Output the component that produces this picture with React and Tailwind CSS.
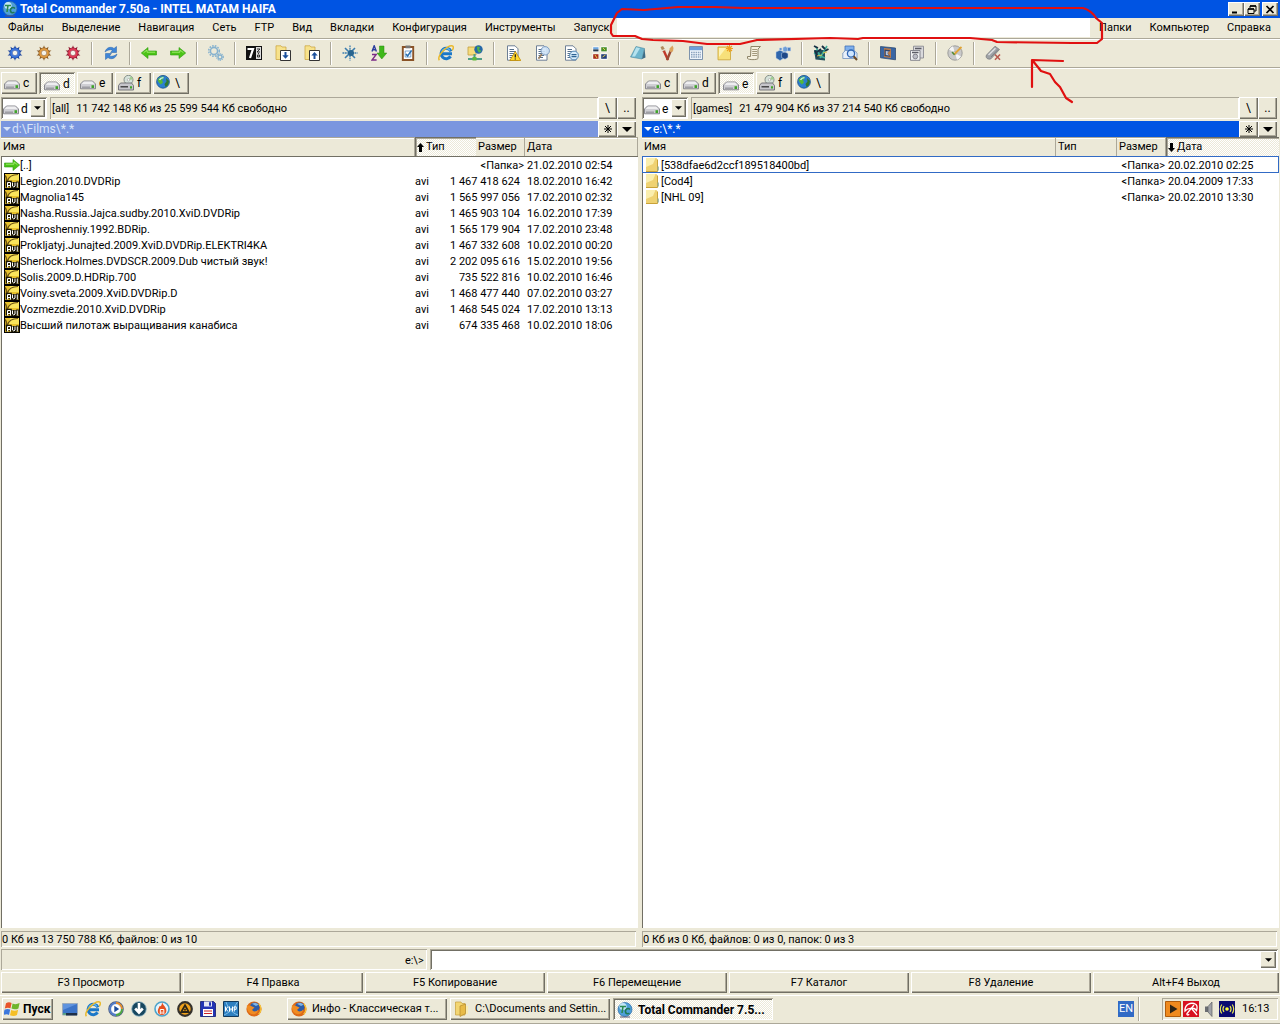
import clsx from 'clsx';

const RAISED = 'bg-[#ece9d8] shadow-[inset_1px_1px_#fff,inset_-1px_-1px_#716f64,inset_-2px_-2px_#aca899]';
const SUNKEN = 'shadow-[inset_1px_1px_#aca899,inset_-1px_-1px_#fff]';
const DEEP = 'shadow-[inset_1px_1px_#aca899,inset_-1px_-1px_#fff,inset_2px_2px_#716f64]';
const CHECKED = 'bg-[repeating-conic-gradient(#fff_0_25%,#ece9d8_0_50%)] bg-[length:2px_2px]';

const leftMenu = ['Файлы', 'Выделение', 'Навигация', 'Сеть', 'FTP', 'Вид', 'Вкладки', 'Конфигурация', 'Инструменты', 'Запуск'];
const rightMenu = ['Папки', 'Компьютер', 'Справка'];

const toolbar = [
  ['gearBlue', 'gearOrange', 'gearRed'],
  ['refresh'],
  ['back', 'forward'],
  ['gears'],
  ['sevenZip', 'unpack', 'pack'],
  ['star', 'sort', 'clipboard'],
  ['ie', 'network'],
  ['docWarn', 'docFind', 'docMinus', 'thumbs'],
  ['notepad', 'brushes', 'calc', 'noteNew', 'scroll', 'cubes'],
  ['registry', 'finder'],
  ['movie', 'printer'],
  ['disc'],
  ['usb'],
];

const leftFiles = [
  { icon: 'forward', name: '[..]', ext: '', size: '<Папка>', date: '21.02.2010 02:54' },
  { icon: 'avi', name: 'Legion.2010.DVDRip', ext: 'avi', size: '1 467 418 624', date: '18.02.2010 16:42' },
  { icon: 'avi', name: 'Magnolia145', ext: 'avi', size: '1 565 997 056', date: '17.02.2010 02:32' },
  { icon: 'avi', name: 'Nasha.Russia.Jajca.sudby.2010.XviD.DVDRip', ext: 'avi', size: '1 465 903 104', date: '16.02.2010 17:39' },
  { icon: 'avi', name: 'Neproshenniy.1992.BDRip.', ext: 'avi', size: '1 565 179 904', date: '17.02.2010 23:48' },
  { icon: 'avi', name: 'Prokljatyj.Junajted.2009.XviD.DVDRip.ELEKTRI4KA', ext: 'avi', size: '1 467 332 608', date: '10.02.2010 00:20' },
  { icon: 'avi', name: 'Sherlock.Holmes.DVDSCR.2009.Dub чистый звук!', ext: 'avi', size: '2 202 095 616', date: '15.02.2010 19:56' },
  { icon: 'avi', name: 'Solis.2009.D.HDRip.700', ext: 'avi', size: '735 522 816', date: '10.02.2010 16:46' },
  { icon: 'avi', name: 'Voiny.sveta.2009.XviD.DVDRip.D', ext: 'avi', size: '1 468 477 440', date: '07.02.2010 03:27' },
  { icon: 'avi', name: 'Vozmezdie.2010.XviD.DVDRip', ext: 'avi', size: '1 468 545 024', date: '17.02.2010 13:13' },
  { icon: 'avi', name: 'Высший пилотаж выращивания канабиса', ext: 'avi', size: '674 335 468', date: '10.02.2010 18:06' },
];

const rightFiles = [
  { icon: 'folder', name: '[538dfae6d2ccf189518400bd]', ext: '', size: '<Папка>', date: '20.02.2010 02:25', current: true },
  { icon: 'folder', name: '[Cod4]', ext: '', size: '<Папка>', date: '20.04.2009 17:33' },
  { icon: 'folder', name: '[NHL 09]', ext: '', size: '<Папка>', date: '20.02.2010 13:30' },
];

const fkeys = ['F3 Просмотр', 'F4 Правка', 'F5 Копирование', 'F6 Перемещение', 'F7 Каталог', 'F8 Удаление', 'Alt+F4 Выход'];

function Gear({ color, dark }) {
  return (
    <>
      {[0, 36, 72, 108, 144, 180, 216, 252, 288, 324].map(a => (
        <path key={a} d="M6.6 4L8 0.2L9.4 4Z" fill={dark} transform={`rotate(${a} 8 8)`} />
      ))}
      <circle cx="8" cy="8" r="4" fill="#f4f2ea" stroke={color} strokeWidth="2.4" />
      <circle cx="8" cy="8" r="5.2" stroke={dark} strokeWidth="0.6" />
      <circle cx="8" cy="8" r="2.7" stroke={dark} strokeWidth="0.5" />
    </>
  );
}

const arrowShape = 'M0.5 6H9V2.5L15.7 8L9 13.5V10H0.5Z';
const page = <path d="M2.5 0.8H10L13 3.8V15.2H2.5Z" fill="#fff" stroke="#6d7f95" />;
const pageLines = <path d="M4.5 4.5H9M4.5 6.5H11M4.5 8.5H11M4.5 10.5H10M4.5 12.5H9" stroke="#55708c" />;

const glyphs = {
  gearBlue: <Gear color="#3d76dc" dark="#1c45a0" />,
  gearOrange: <Gear color="#e09a40" dark="#8a5a24" />,
  gearRed: <Gear color="#e03a55" dark="#8c1830" />,
  refresh: (
    <g fill="#3f86d8" stroke="#2560a8" strokeWidth="0.5">
      <path d="M2 7C3 2.5 8 1 11 3.5L13.5 1.5V7.5H7.5L9.5 5.3C7.5 4 4.5 5 2 7Z" />
      <path d="M14 9C13 13.5 8 15 5 12.5L2.5 14.5V8.5H8.5L6.5 10.7C8.5 12 11.5 11 14 9Z" />
    </g>
  ),
  back: (
    <g transform="translate(16 0) scale(-1 1)">
      <path d={arrowShape} fill="#4cc417" stroke="#2c9a10" strokeWidth="0.6" />
      <path d="M2 7.2H10V5L13.5 7.8" stroke="#9be86a" />
    </g>
  ),
  forward: (
    <>
      <path d={arrowShape} fill="#4cc417" stroke="#2c9a10" strokeWidth="0.6" />
      <path d="M2 7.2H10V5L13.5 7.8" stroke="#9be86a" />
    </>
  ),
  gears: (
    <g stroke="#86b2cf">
      <circle cx="6" cy="6" r="3.6" strokeWidth="1.6" />
      <circle cx="6" cy="6" r="5.3" strokeWidth="1.5" strokeDasharray="1.6 1.2" />
      <circle cx="12" cy="12" r="2" strokeWidth="1.4" />
      <circle cx="12" cy="12" r="3.3" strokeWidth="1.2" strokeDasharray="1.2 0.9" />
    </g>
  ),
  sevenZip: (
    <>
      <path d="M0 1H16V15H0Z" fill="#111" />
      <path d="M1.5 4H7L4 13" stroke="#fff" strokeWidth="2.2" />
      <path d="M10 2H15V14H10Z" fill="#ddd" />
      <path d="M11 4H14L11 7H14M12.5 8V9M11.5 10H13.5V12H11.5Z" stroke="#222" strokeWidth="0.9" />
    </>
  ),
  unpack: (
    <>
      <path d="M1 0.8H6L7 2H11V14.5H1Z" fill="#f7e28c" stroke="#c8a23a" strokeWidth="0.7" />
      <path d="M5.5 5.5H15.5V15.5H5.5Z" fill="#fff" stroke="#333" />
      <path d="M10.5 7V11" stroke="#1a4f9c" strokeWidth="2" />
      <path d="M7.3 10.3H13.7L10.5 13.8Z" fill="#1a4f9c" />
    </>
  ),
  pack: (
    <>
      <path d="M1 0.8H6L7 2H11V14.5H1Z" fill="#f7e28c" stroke="#c8a23a" strokeWidth="0.7" />
      <path d="M5.5 5.5H15.5V15.5H5.5Z" fill="#fff" stroke="#333" />
      <path d="M10.5 14V10" stroke="#1a4f9c" strokeWidth="2" />
      <path d="M7.3 10.5H13.7L10.5 7Z" fill="#1a4f9c" />
    </>
  ),
  star: (
    <g stroke="#3a7cae" strokeWidth="1.3">
      <path d="M8 0.5V15.5M0.5 8H15.5" strokeDasharray="1.8 0.6" />
      <path d="M3 3L13 13M13 3L3 13" strokeWidth="1.6" />
      <circle cx="9" cy="8" r="3" fill="#28648f" stroke="none" />
    </g>
  ),
  sort: (
    <>
      <path d="M1 6.5L3.2 0.8L5.4 6.5M1.8 4.8H4.6" stroke="#2a3c9c" strokeWidth="1.4" />
      <path d="M1 9.5H5.2L1 15H5.6" stroke="#7a2a86" strokeWidth="1.4" />
      <path d="M8.5 1H13V8H15.8L10.8 14L6 8H8.5Z" fill="#3fb81a" stroke="#2a8a10" strokeWidth="0.5" />
    </>
  ),
  clipboard: (
    <>
      <path d="M2.8 2H13.2V15H2.8Z" fill="#fff" stroke="#8a5327" strokeWidth="1.9" />
      <path d="M5.5 0.5H10.5V3.3H5.5Z" fill="#777" />
      <path d="M5.2 6H10.8V12H5.2Z" stroke="#5a8fc4" strokeWidth="0.8" />
      <path d="M6 9L7.6 11L11.6 5.4" stroke="#2a6fb0" strokeWidth="1.6" />
    </>
  ),
  ie: (
    <>
      <path d="M13 6.3A5.2 5.2 0 1 0 12.6 11.4M3.5 8.7H14" stroke="#1b78c8" strokeWidth="3" />
      <path d="M12 5.4A4.6 4.6 0 0 0 3.8 6.8" stroke="#63baf2" strokeWidth="1.2" />
      <path d="M1.4 15.2C-1.5 11.5 9 0 14.4 0.9C16 1.6 15.3 4 14.2 5.4" stroke="#e9b92c" strokeWidth="1.5" />
    </>
  ),
  network: (
    <>
      <path d="M1 2H9V10H1Z" fill="#f5dc7c" stroke="#c3a040" strokeWidth="0.8" />
      <circle cx="11.5" cy="4.5" r="4.2" fill="#2568a8" />
      <path d="M10 1.5L13 2L12 4.5L14.5 6L12 7.8L10.3 5Z" fill="#4fb446" />
      <path d="M7.5 9V13M1 14H15" stroke="#4f9e87" strokeWidth="2" />
      <path d="M5.5 12H9.5V15.5H5.5Z" fill="#5cb83b" />
    </>
  ),
  docWarn: (
    <>
      {page}{pageLines}
      <path d="M10.3 6.5L15.8 15.5H4.8Z" fill="#ffd92e" stroke="#c08a00" strokeWidth="0.8" />
      <path d="M10.3 9.3V12.5M10.3 13.4V14.6" stroke="#222" strokeWidth="1.3" />
    </>
  ),
  docFind: (
    <>
      {page}{pageLines}
      <path d="M7.8 9L4.5 13.8" stroke="#9b8063" strokeWidth="1.8" />
      <circle cx="11.2" cy="5.8" r="4.2" fill="#cfe3f7" fillOpacity="0.9" stroke="#7a9ac0" />
    </>
  ),
  docMinus: (
    <>
      {page}{pageLines}
      <circle cx="11" cy="10.5" r="4.4" fill="#d9ecfa" stroke="#4f86b4" />
      <path d="M8.5 9.7H13.5M8.5 11.6H13.5" stroke="#2d6494" strokeWidth="1.2" />
    </>
  ),
  thumbs: (
    <>
      <path d="M0.5 1.5H7.2V7.2H0.5ZM8.5 1.5H15.5V7.2H8.5ZM0.5 8.5H7.2V14.7H0.5ZM8.5 8.5H15.5V14.7H8.5Z" fill="#fff" />
      <path d="M1.2 2.2H6.5V4.4H1.2Z" fill="#6ea7e0" />
      <path d="M1.2 4.4H6.5V6.4H1.2Z" fill="#26394d" />
      <path d="M9.2 2.2H14.8V6.4H9.2Z" fill="#4a8f2c" />
      <path d="M1.2 9.2H6.5V13.8H1.2Z" fill="#a82c1a" />
      <path d="M9.2 9.2H14.8V13.8H9.2Z" fill="#243f7c" />
      <path d="M11 3L13 5M3 10L5 13M10.5 12L13.5 10" stroke="#e6d24a" />
    </>
  ),
  notepad: (
    <>
      <path d="M6 1.5L14.5 3.5L12 14L0.5 12Z" fill="#6db5cd" stroke="#4a8aa0" strokeWidth="0.6" />
      <path d="M14.5 3.5L15.5 12.5L12 14Z" fill="#3d6c86" />
      <path d="M6.3 2.3L10 3.2L5 11.5L2 11.4Z" fill="#b5e2ee" />
    </>
  ),
  brushes: (
    <>
      <path d="M4 4L9 15" stroke="#c0392b" strokeWidth="2.4" />
      <path d="M12.5 4L8 15" stroke="#9a4a34" strokeWidth="2.4" />
      <path d="M1.5 2L4 1L6.5 5.5L3.5 6.5Z" fill="#b08a5c" />
      <path d="M13.5 0.5L10.5 3.5L11 7L14 6.5L14.5 3Z" fill="#dba35c" />
      <path d="M3 5.5L6 4.5" stroke="#eee" />
    </>
  ),
  calc: (
    <>
      <path d="M1.5 1.5H14.5V14.5H1.5Z" fill="#eef4fb" stroke="#7d93ad" />
      <path d="M2 2H14V5.2H2Z" fill="#6d9fd8" />
      <path d="M3 7.5H13M3 9.7H13M3 12H13" stroke="#8aa2be" strokeWidth="1.4" strokeDasharray="1.5 0.8" />
    </>
  ),
  noteNew: (
    <>
      <path d="M1 2H13.5V14.8H1Z" fill="#f7e07a" stroke="#cfa93e" strokeWidth="0.9" />
      <path d="M2 3H9L2 12Z" fill="#fdf3b8" />
      <path d="M12.5 0V7M9 3.5H16M10 1L15 6M15 1L10 6" stroke="#f0a020" strokeWidth="1.1" />
    </>
  ),
  scroll: (
    <>
      <path d="M5 1.5H14.5L12 4V13.5C11 15 3 15 1.5 13.5V11.5H4.5Z" fill="#f6f1e0" stroke="#8d8468" />
      <path d="M6.2 4.5H11M6.2 6.5H11M6.2 8.5H11M6.2 10.5H11" stroke="#a49a7d" />
    </>
  ),
  cubes: (
    <g stroke="#b8cfea" strokeWidth="0.5">
      <path d="M1 7L5 5.2L9 7V13L5 15.5L1 13Z" fill="#2f66ac" />
      <path d="M6.5 8.2L10 7L13 8.5V12.5L10 14.2L6.5 12.5Z" fill="#1e4888" />
      <path d="M8 2.5L10.5 1.5L12.5 3V5.8L10 7L8 5.8Z" fill="#6f9fd8" />
      <path d="M12.5 2.5H15.7V6H12.5Z" fill="#4c80c4" />
      <path d="M4.5 3H6.8V5H4.5Z" fill="#4c80c4" />
    </g>
  ),
  registry: (
    <>
      <path d="M1 5H12V15.5L2.5 14.5Z" fill="#24505c" />
      <path d="M3 2L8 13M14 1L7 13M1 8L12 13" stroke="#3fae9c" strokeWidth="1.6" />
      <path d="M1 1L5 3M9 1L12 4M12 6L15.5 4M4 7L8 4M2 6L5 12" stroke="#183044" strokeWidth="1.9" />
      <path d="M10 8L14 7M4 11L9 10" stroke="#d8c850" />
    </>
  ),
  finder: (
    <>
      <path d="M3 1H12V8H3Z" fill="#7fb0ec" stroke="#3f70b8" strokeWidth="0.8" />
      <path d="M0.8 8L3.5 5.5H12L15 8V13.5H0.8Z" fill="#e8eff9" stroke="#6f8fbd" strokeWidth="0.8" />
      <circle cx="9" cy="8.6" r="3.6" fill="#cfe6ff" stroke="#2f66b4" strokeWidth="1.3" />
      <path d="M11.6 11.3L15 15" stroke="#6c4b27" strokeWidth="2" />
    </>
  ),
  movie: (
    <>
      <path d="M0.5 1.5L15.5 3V14.8L0.5 12.8Z" fill="#3a66a4" stroke="#233f68" strokeWidth="0.7" />
      <path d="M4 3L11 3.8V13L4 12Z" fill="#c07c46" />
      <path d="M4.5 4.5L10.5 5.3L7.5 8L10.5 11.7L4.5 11Z" fill="#34466a" />
      <path d="M5.8 6L9 6.5L7.3 8L9 10.5L5.8 10Z" fill="#b4c3da" />
    </>
  ),
  printer: (
    <>
      <path d="M4.5 1.2H14.5V13H4.5Z" fill="#d9d9dc" stroke="#8a8a92" strokeWidth="0.9" />
      <path d="M1.5 5.5H11V15.3H1.5Z" fill="#f1f1f3" stroke="#7b7b84" strokeWidth="0.9" />
      <path d="M6 3.5H12.5M3 7.5H9.5" stroke="#5c5c66" strokeWidth="1.4" />
      <circle cx="6.3" cy="11.5" r="2.4" fill="#bcbcc6" stroke="#70707a" strokeWidth="0.8" />
    </>
  ),
  disc: (
    <>
      <circle cx="8" cy="8" r="7.2" fill="#c9c9c9" stroke="#8f8f8f" strokeWidth="0.8" />
      <path d="M8 8L2 4.5A7 7 0 0 1 6 1.3ZM8 8L14 11.5A7 7 0 0 1 10 14.7Z" fill="#f6f6f6" />
      <circle cx="8" cy="8" r="1.8" fill="#ece9d8" stroke="#999" strokeWidth="0.6" />
      <path d="M14.5 2L7 9.5" stroke="#e0a436" strokeWidth="1.8" />
      <path d="M5 7L7.5 9.8" stroke="#4e8b3a" strokeWidth="1.4" />
    </>
  ),
  usb: (
    <>
      <path d="M1.5 10L10 1.2L14.5 4.5L6 13.8C3 15 0 12.8 1.5 10Z" fill="#9fa2a6" stroke="#72767a" strokeWidth="0.7" />
      <path d="M3.5 10L10.5 3.2" stroke="#dfe1e3" strokeWidth="1.5" />
      <path d="M6 12L13 4.5" stroke="#7c8084" />
      <path d="M10 9.5L15 14.8M15 9.5L10 14.8" stroke="#b85a50" strokeWidth="1.6" />
    </>
  ),
  avi: (
    <>
      <path d="M0 0H16V16H0Z" fill="#000" />
      <path d="M1 1H15V15H1Z" fill="#e8c22c" />
      <path d="M6 1H15V7H5Z" fill="#f9e45c" />
      <path d="M3.5 8C4.5 4 8 1.5 14 1.5M1 2.5C2.5 4 3 6 2.5 9" stroke="#6b5210" strokeWidth="1.2" />
      <path d="M3 14.5V9H6.5V14.5M3 12H6.5M8.5 9V14H11V9M13.5 8.5V14.8" stroke="#1a1604" strokeWidth="2.6" />
      <path d="M3.5 14.5V9.5H6.5V14.5M3.5 12.5H6.5M8.5 9.5V13L9.8 14L11 13V9.5M13.3 9.5V14.5" stroke="#fff" />
    </>
  ),
  folder: (
    <>
      <path d="M1 1H11.5L12.5 3V14.5H1Z" fill="#efd272" />
      <path d="M1 1H10.5L8 7L1 10Z" fill="#faeeae" />
      <path d="M1 14.5H12.5V2.5" stroke="#c9a238" />
      <path d="M12.5 9.5H13.8V13.5H12.5Z" fill="#8fae9c" />
    </>
  ),
  drive: (
    <>
      <path d="M3.5 6H12.5L15.5 9V13.8H0.5V9Z" fill="#cfcfd4" stroke="#7e7e85" strokeWidth="0.9" />
      <path d="M3.8 6.6H12.2L14.5 9H1.5Z" fill="#eeeef0" />
      <path d="M2 12.2H10" stroke="#9a9aa0" strokeWidth="1.4" />
      <path d="M11.5 10.2H14V13H11.5Z" fill="#3fa42a" />
    </>
  ),
  dvd: (
    <>
      <circle cx="10.5" cy="4.8" r="4.5" fill="#d6e2da" stroke="#7d8781" strokeWidth="0.9" />
      <path d="M10.5 4.8L13 1.3A4.4 4.4 0 0 1 14.9 4.5Z" fill="#9fce8f" />
      <circle cx="10.5" cy="4.8" r="1.2" fill="#fff" stroke="#888" strokeWidth="0.5" />
      <path d="M2.5 8H13.5L15.5 10.5V15H0.5V10.5Z" fill="#c6c6cb" stroke="#6c6c73" strokeWidth="0.9" />
      <path d="M2.5 11.8H10" stroke="#333" strokeWidth="1.3" />
      <path d="M12 11.2H14V13.4H12Z" fill="#3fa42a" />
    </>
  ),
  globe: (
    <>
      <circle cx="7" cy="6.8" r="6.4" fill="#2b7fd0" stroke="#174f8a" strokeWidth="0.8" />
      <path d="M3 3L7 1.2L8 3L6 5L7 7.5L4.8 9.5L2.5 7L1.6 5Z" fill="#54b83c" />
      <path d="M10 3L13 6L12 10L9.5 12L8.5 9L10.5 6.5Z" fill="#2f7a30" />
      <path d="M3.5 4.8C4.5 3 6 2.6 7.5 2.6" stroke="#c8ecff" strokeWidth="1.4" />
    </>
  ),
  tc: (
    <>
      <circle cx="8" cy="7.5" r="7" fill="#4e9fd8" stroke="#2d6aa6" strokeWidth="0.7" />
      <circle cx="6" cy="4.5" r="3.6" fill="#c4e6f7" />
      <path d="M3 4.5H9M6 4.5L5 11" stroke="#2b8a50" strokeWidth="1.6" />
      <path d="M13 7.5C11 5.5 8.5 7 8.4 9.4C8.5 12 11 12.2 12.4 11" stroke="#1f7a56" strokeWidth="1.6" />
      <path d="M3 15H13" stroke="#557" />
    </>
  ),
  windows: (
    <>
      <path d="M2 2.2C4 1 5.8 1 7.6 2L6.5 7.3C4.7 6.4 3 6.4 0.8 7.4Z" fill="#e8542a" />
      <path d="M8.6 2.4C10.7 3.6 13 3.3 15.6 2L14.4 7.4C12 8.6 9.7 8.5 7.5 7.6Z" fill="#6fb52c" />
      <path d="M0.5 8.7C2.8 7.6 4.5 7.7 6.2 8.6L5 13.9C3.4 13 1.8 13 -0.6 14Z" fill="#3d78dc" />
      <path d="M7.2 8.9C9.4 9.9 11.6 10 14.1 8.7L13 14.1C10.4 15.4 8.2 15.2 6 14.2Z" fill="#f5bf26" />
    </>
  ),
  desktop: (
    <>
      <path d="M0.5 2.5H15.5V14H0.5Z" fill="#3c74c8" stroke="#9aaabc" />
      <path d="M1 3H15L1 9Z" fill="#5f93de" />
      <path d="M4 12H15V14.5H4Z" fill="#1d2f48" />
      <path d="M1 13H4" stroke="#5cc04a" />
    </>
  ),
  player: (
    <>
      <circle cx="8" cy="8" r="7.2" fill="#dfe5ee" stroke="#4c5f84" strokeWidth="1.2" />
      <path d="M8 2A6 6 0 0 1 14 8" stroke="#e58c28" strokeWidth="1.8" />
      <path d="M14 8A6 6 0 0 1 8 14" stroke="#4ca83c" strokeWidth="1.8" />
      <path d="M8 14A6 6 0 0 1 8 2" stroke="#4f79c8" strokeWidth="1.8" />
      <circle cx="8" cy="8" r="4.2" fill="#fff" />
      <path d="M6.3 4.8L11.2 8L6.3 11.2Z" fill="#1c4c9c" />
    </>
  ),
  download: (
    <>
      <circle cx="8" cy="8" r="7.3" fill="#17475f" stroke="#8fb6c8" strokeWidth="0.8" />
      <path d="M8 2V11M4.2 7.5L8 11.5L11.8 7.5" stroke="#fff" strokeWidth="2.6" />
    </>
  ),
  flame: (
    <>
      <circle cx="8" cy="8" r="7" fill="#e8f4fb" stroke="#4ba3cc" strokeWidth="1.6" />
      <path d="M8 1C9 4.5 13 6.5 12.3 10.5C11.8 13 10 14 8 14C5.5 14 3.8 12.5 3.8 10C3.8 8 5 7 5.5 5C7 6 8 4 8 1Z" fill="#e5501e" />
      <path d="M6.3 13V8.5H9.8V13M8 10.5V13" stroke="#fff" />
    </>
  ),
  aimp: (
    <>
      <circle cx="8" cy="8" r="6.8" fill="#f0a21c" stroke="#35322c" strokeWidth="2.2" />
      <path d="M8 4.3L11.8 11H4.2Z" stroke="#2c2616" strokeWidth="1.8" />
      <circle cx="8" cy="8.8" r="1" fill="#2c2616" />
    </>
  ),
  floppy: (
    <>
      <path d="M0.5 0.5H13.5L15.5 2.5V15.5H0.5Z" fill="#2233b4" stroke="#131c70" strokeWidth="0.8" />
      <path d="M4 0.5H12V5.5H4Z" fill="#e4e6f4" />
      <path d="M9 1.2H11V4.8H9Z" fill="#2233b4" />
      <path d="M3 8H13V15H3Z" fill="#fff" />
      <path d="M4 10H12M4 12.5H12" stroke="#c22" />
    </>
  ),
  kmp: (
    <>
      <path d="M0.5 0.5H15.5V15.5H0.5Z" fill="#2d7fc0" stroke="#123a5c" />
      <path d="M1 14C6 12 11 7 14.5 1M3 1C5 7 9 12 15 14" stroke="#7fc0ea" />
      <path d="M2.5 5.5V10.5M5 5.5L3 8L5 10.5M6.5 10.5V5.5M9.5 5.5V10.5M6.5 8H9.5M11.3 10.5V5.8H13.2V8.3H11.3" stroke="#fff" />
    </>
  ),
  firefox: (
    <>
      <circle cx="8" cy="8" r="7.6" fill="#dd6a18" />
      <circle cx="8.7" cy="6.2" r="4.8" fill="#2c5ca8" />
      <path d="M6 2.8C8 1.4 11 1.8 12.5 3.8L10 5Z" fill="#7fb4e6" />
      <path d="M1 4C1.8 5 3 4.4 4 4.6C5.5 5 6.8 6 8.5 6.5C7.5 8 5.8 8 6.5 9.5C8 11.4 11 10.5 12 8.6C12.3 12 8 14.6 4.4 12.6C1.4 10.8 0.5 7 1 4Z" fill="#f08c22" />
      <path d="M13 3C15.6 6 15.6 10.5 12.6 13.2" stroke="#f7c93a" strokeWidth="1.2" />
    </>
  ),
  openFolder: (
    <>
      <path d="M1.5 1H7L8 2.5H11V14H1.5Z" fill="#f3d673" stroke="#c69f3c" strokeWidth="0.7" />
      <path d="M6 5L11.5 3V12.5L6 15.5Z" fill="#e8bb48" stroke="#b48a2c" strokeWidth="0.7" />
      <path d="M12 5H14V13H12Z" fill="#f9ecb4" />
    </>
  ),
  media: (
    <>
      <path d="M0.5 0.5H15.5V15.5H0.5Z" fill="#ef8a1e" stroke="#b05c0c" />
      <path d="M5 3.5L12.5 8L5 12.5Z" fill="#2d2415" />
    </>
  ),
  avira: (
    <>
      <path d="M0 0H16V16H0Z" fill="#d81020" />
      <path d="M2 10C1.5 3.5 8 0.5 13 3.5C14.5 5 14.3 7 13.5 9.5C12 7.5 10 7 8.5 7.5C6 7 4 8 2 10Z" stroke="#fff" strokeWidth="1.3" />
      <path d="M11 4L4 12.5C3.4 14.2 5.4 14.5 6 13M9 8L14 14" stroke="#fff" strokeWidth="1.3" />
    </>
  ),
  speaker: (
    <>
      <path d="M4 5.5H7V11H4Z" fill="#6b6d72" />
      <path d="M7 5.5L11 1V15.5L7 11Z" fill="#a0a2a8" stroke="#5c5e62" strokeWidth="0.7" />
    </>
  ),
  signal: (
    <>
      <path d="M0 0H16V16H0Z" fill="#0a0a70" />
      <circle cx="8" cy="8" r="1.8" fill="#ffff38" />
      <path d="M5 5C3.6 7 3.6 9 5 11M11 5C12.4 7 12.4 9 11 11M2.8 3.5C0.8 6 0.8 10 2.8 12.5M13.2 3.5C15.2 6 15.2 10 13.2 12.5" stroke="#e8e850" strokeWidth="1.2" />
    </>
  ),
};

function Icon({ name }) {
  return <svg viewBox="0 0 16 16" className="size-4 shrink-0" fill="none" aria-hidden="true">{glyphs[name]}</svg>;
}

function Triangle({ size = 'h-[5px] w-[10px]' }) {
  return <svg viewBox="0 0 10 5" className={clsx('shrink-0', size)} fill="currentColor" aria-hidden="true"><path d="M0 0H10L5 5Z" /></svg>;
}

function Asterisk() {
  return <svg viewBox="0 0 8 8" className="size-2" stroke="#000" aria-hidden="true"><path d="M4 0V8M0 4H8M1 1L7 7M7 1L1 7" /></svg>;
}

function SortArrow({ down }) {
  return (
    <svg viewBox="0 0 7 9" className={clsx('h-[9px] w-[7px] shrink-0', down && 'rotate-180')} aria-hidden="true">
      <path d="M3.5 0L7 4H5V9H2V4H0Z" />
    </svg>
  );
}

function WindowButton({ label, children }) {
  return (
    <button aria-label={label} className={clsx('grid h-[14px] w-4 place-items-center', RAISED)}>
      <svg viewBox="0 0 10 9" className="h-[9px] w-[10px]" fill="none" stroke="#000">{children}</svg>
    </button>
  );
}

function Drives({ active }) {
  const drives = [['c', 'drive'], ['d', 'drive'], ['e', 'drive'], ['f', 'dvd'], ['\\', 'globe']];
  return (
    <div className="flex h-[22px] gap-[2px] text-[12px]">
      {drives.map(([letter, icon]) => (
        <button key={letter}
                className={clsx('flex w-9 items-center gap-[3px]',
                  letter === active ? [CHECKED, DEEP, 'pt-[2px] pl-[5px]'] : [RAISED, 'pl-[3px]'])}>
          <Icon name={icon} />
          <span>{letter}</span>
        </button>
      ))}
    </div>
  );
}

function HeadCell({ label, sorted, down }) {
  return (
    <th scope="col" className={clsx('h-[19px] p-0 text-left font-normal',
      sorted ? [CHECKED, 'shadow-[inset_1px_1px_#716f64,inset_2px_2px_#aca899]'] : 'bg-[#ece9d8] shadow-[inset_0_1px_#aca899,inset_-1px_0_#aca899,inset_0_2px_#fff]')}>
      <span className="flex items-center gap-[2px] pt-[2px] pl-[2px]">
        {sorted && <SortArrow down={down} />}
        {label}
      </span>
    </th>
  );
}

function Panel({ drive, label, free, path, active, files, sort, down, status }) {
  return (
    <section className="flex min-w-0 flex-col">
      <Drives active={drive} />

      <div className="mt-[3px] flex h-[22px] items-stretch">
        <label className={clsx('mr-[3px] flex w-[46px] items-center bg-white pl-[2px]', DEEP)}>
          <Icon name="drive" />
          <select aria-label="Диск" defaultValue={drive} className="w-3 flex-1 appearance-none bg-transparent pt-[2px] pl-[2px] text-[12px] outline-none">
            {['c', 'd', 'e', 'f'].map(d => <option key={d}>{d}</option>)}
          </select>
          <span className={clsx('mr-[2px] grid h-[18px] w-[15px] place-items-center', RAISED)}><Triangle size="h-1 w-[7px]" /></span>
        </label>
        <div className={clsx('flex flex-1 items-center gap-[7px] pt-[2px] pl-[2px] whitespace-pre', SUNKEN)}>
          <span>{label}</span>
          <span>{free}</span>
        </div>
        <button className={clsx('w-[19px] text-[12px]', RAISED)}>\</button>
        <button className={clsx('mr-[2px] w-[19px] text-[12px]', RAISED)}>..</button>
      </div>

      <div className="mt-[2px] flex h-4">
        <div className={clsx('flex flex-1 items-center gap-[1px] pl-[2px]',
          active ? 'bg-[#0054e3] text-white' : 'bg-[#7a96df] text-[#d8e4f8]')}>
          <Triangle size="h-1 w-[8px]" />
          <span className="text-[12px]">{path}</span>
        </div>
        <button aria-label="Избранное" className={clsx('grid w-[19px] place-items-center', RAISED)}><Asterisk /></button>
        <button aria-label="История" className={clsx('mr-[2px] grid w-[19px] place-items-center', RAISED)}><Triangle /></button>
      </div>

      <div className="flex-1 bg-white shadow-[inset_1px_0_#716f64,inset_-1px_-1px_#fff]">
        <table className="w-full table-fixed border-collapse">
          <colgroup>
            <col />
            <col className="w-[61px]" />
            <col className="w-[49px]" />
            <col className="w-[113px]" />
          </colgroup>
          <thead className="border-b border-[#716f64]">
            <tr>
              <HeadCell label="Имя" />
              <HeadCell label="Тип" sorted={sort === 'ext'} down={down} />
              <HeadCell label="Размер" />
              <HeadCell label="Дата" sorted={sort === 'date'} down={down} />
            </tr>
          </thead>
          <tbody>
            {files.map(f => (
              <tr key={f.name} className={clsx('h-4 leading-[14px]', f.current && 'outline outline-1 -outline-offset-1 outline-[#316ac5]')}>
                <td className="p-0">
                  <span className="flex pl-[3px] whitespace-nowrap"><Icon name={f.icon} /><span className="pt-[2px]">{f.name}</span></span>
                </td>
                <td className="p-0 pt-[2px]">{f.ext}</td>
                <td className="p-0 pt-[2px]">
                  <span className={clsx('flex justify-end whitespace-nowrap', f.ext ? 'pr-[5px]' : 'pr-[1px]')}>{f.size}</span>
                </td>
                <td className="p-0 pt-[2px] pl-[2px] whitespace-nowrap">{f.date}</td>
              </tr>
            ))}
          </tbody>
        </table>
      </div>

      <div className={clsx('mt-[3px] mr-[2px] h-4 pt-[2px] pl-[1px]', SUNKEN)}>{status}</div>
    </section>
  );
}

function TaskButton({ icon, children, active }) {
  return (
    <button className={clsx('flex h-[22px] w-40 items-center gap-[5px] pr-1 pl-1',
      active ? [CHECKED, DEEP, 'pt-[2px] text-[12px] font-bold'] : RAISED)}>
      <Icon name={icon} />
      <span className="whitespace-nowrap">{children}</span>
    </button>
  );
}

export default function App() {
  return (
    <div className="relative flex min-h-screen flex-col bg-[#ece9d8] font-[Roboto,'Liberation_Sans',sans-serif] text-[11px] leading-[14px] text-black">
      <header className="flex h-[18px] items-center bg-[#0054e3] pr-[2px] pl-[2px] text-white">
        <Icon name="tc" />
        <h1 className="ml-[2px] flex-1 text-[12px] font-bold">Total Commander 7.50a - INTEL MATAM HAIFA</h1>
        <WindowButton label="Свернуть"><path d="M1 7.5H6" strokeWidth="2" /></WindowButton>
        <WindowButton label="Восстановить">
          <path d="M3 3V1H9V6H7M1 4H7V8.5H1Z" />
          <path d="M3 1H9M1 4H7" strokeWidth="1.6" />
        </WindowButton>
        <span className="w-[2px]" />
        <WindowButton label="Закрыть"><path d="M1.5 1L8.5 8M8.5 1L1.5 8" strokeWidth="1.7" /></WindowButton>
      </header>

      <nav className="flex h-[19px] items-stretch">
        <div className="flex gap-[2px]">
          {leftMenu.map(m => <button key={m} className="px-2">{m}</button>)}
        </div>
        <div className="flex-1 bg-white" />
        <div className="flex">
          {rightMenu.map(m => <button key={m} className="px-[9px]">{m}</button>)}
        </div>
      </nav>

      <div className="mt-[1px] flex h-[30px] items-center border-y border-[#aca899] shadow-[inset_0_1px_#fff,0_1px_#fff]">
        {toolbar.map((group, i) => (
          <div key={group[0]} className="flex items-center">
            {i > 0 && <span className="mx-1 h-[23px] w-[1px] bg-[#aca899] shadow-[1px_0_#fff]" />}
            {group.map(name => (
              <button key={name} aria-label={name} className="grid h-6 w-[29px] place-items-center"><Icon name={name} /></button>
            ))}
          </div>
        ))}
      </div>

      <main className="mt-1 grid flex-1 grid-cols-2 gap-1 px-[1px]">
        <Panel drive="d" label="[all]" free="11 742 148 Кб из 25 599 544 Кб свободно" path="d:\Films\*.*"
               files={leftFiles} sort="ext" status="0 Кб из 13 750 788 Кб, файлов: 0 из 10" />
        <Panel drive="e" label="[games]" free="21 479 904 Кб из 37 214 540 Кб свободно" path="e:\*.*" active
               files={rightFiles} sort="date" down status="0 Кб из 0 Кб, файлов: 0 из 0, папок: 0 из 3" />
      </main>

      <div className="mt-[2px] flex h-[21px] pr-[2px] pl-[1px]">
        <label htmlFor="cmd" className={clsx('mr-[3px] w-1/3 pt-[5px] pr-[3px] text-right', SUNKEN)}>e:\&gt;</label>
        <div className={clsx('flex flex-1 items-center bg-white pl-1', DEEP)}>
          <input id="cmd" className="min-w-0 flex-1 bg-transparent outline-none" />
          <button aria-label="История команд" className={clsx('mr-[2px] grid h-[17px] w-4 place-items-center', RAISED)}><Triangle size="h-1 w-[7px]" /></button>
        </div>
      </div>

      <div className="mt-[2px] grid h-[21px] grid-cols-[repeat(6,1fr)_186px] gap-[2px] px-[1px]">
        {fkeys.map(k => <button key={k} className={clsx('pt-[1px]', RAISED)}>{k}</button>)}
      </div>

      <footer className="mt-[2px] flex h-[29px] items-center border-b border-[#aca899] pl-[2px] shadow-[inset_0_1px_#fff]">
        <button className={clsx('flex h-[22px] w-[51px] items-center gap-[3px] pl-[2px] text-[12px] font-bold', RAISED)}>
          <Icon name="windows" />Пуск
        </button>
        <div className="ml-[9px] flex gap-[7px]">
          {['desktop', 'ie', 'player', 'download', 'flame', 'aimp', 'floppy', 'kmp', 'firefox'].map(n => (
            <button key={n} aria-label={n}><Icon name={n} /></button>
          ))}
        </div>
        <div className="ml-[25px] flex flex-1 gap-[3px]">
          <TaskButton icon="firefox">Инфо - Классическая т...</TaskButton>
          <TaskButton icon="openFolder">C:\Documents and Settin...</TaskButton>
          <TaskButton icon="tc" active>Total Commander 7.5...</TaskButton>
        </div>
        <button className="h-4 w-4 bg-[#316ac5] text-white">EN</button>
        <span className="ml-1 h-6 w-[1px] bg-[#aca899] shadow-[1px_0_#fff]" />
        <div className={clsx('mr-[2px] ml-[23px] flex h-[22px] w-[116px] items-center gap-[2px] pl-[3px]', SUNKEN)}>
          <Icon name="media" />
          <Icon name="avira" />
          <Icon name="speaker" />
          <Icon name="signal" />
          <time className="ml-[5px]">16:13</time>
        </div>
      </footer>

      {/* hand-drawn marker over the empty part of the menu */}
      <svg viewBox="0 0 500 110" className="pointer-events-none absolute top-0 right-[172px] h-[110px] w-[500px]" fill="none" stroke="#e01010" strokeWidth="2.2" strokeLinecap="round" strokeLinejoin="round" aria-hidden="true">
        <path d="M9 13L14 9L36 10L70 7L107 7L135 8H475C480 9 486 14 488 18L494 23V39L489 43H464L389 42L384 40L362 38H255L250 39L222 38L149 40L132 44H99L75 41L45 40L34 39L27 36L5 36L3 33V25L9 13Z" />
        <path d="M424 87V60L455 61M425 61L433 71L442 74L447 82L452 87L458 98L464 102" />
      </svg>
    </div>
  );
}
